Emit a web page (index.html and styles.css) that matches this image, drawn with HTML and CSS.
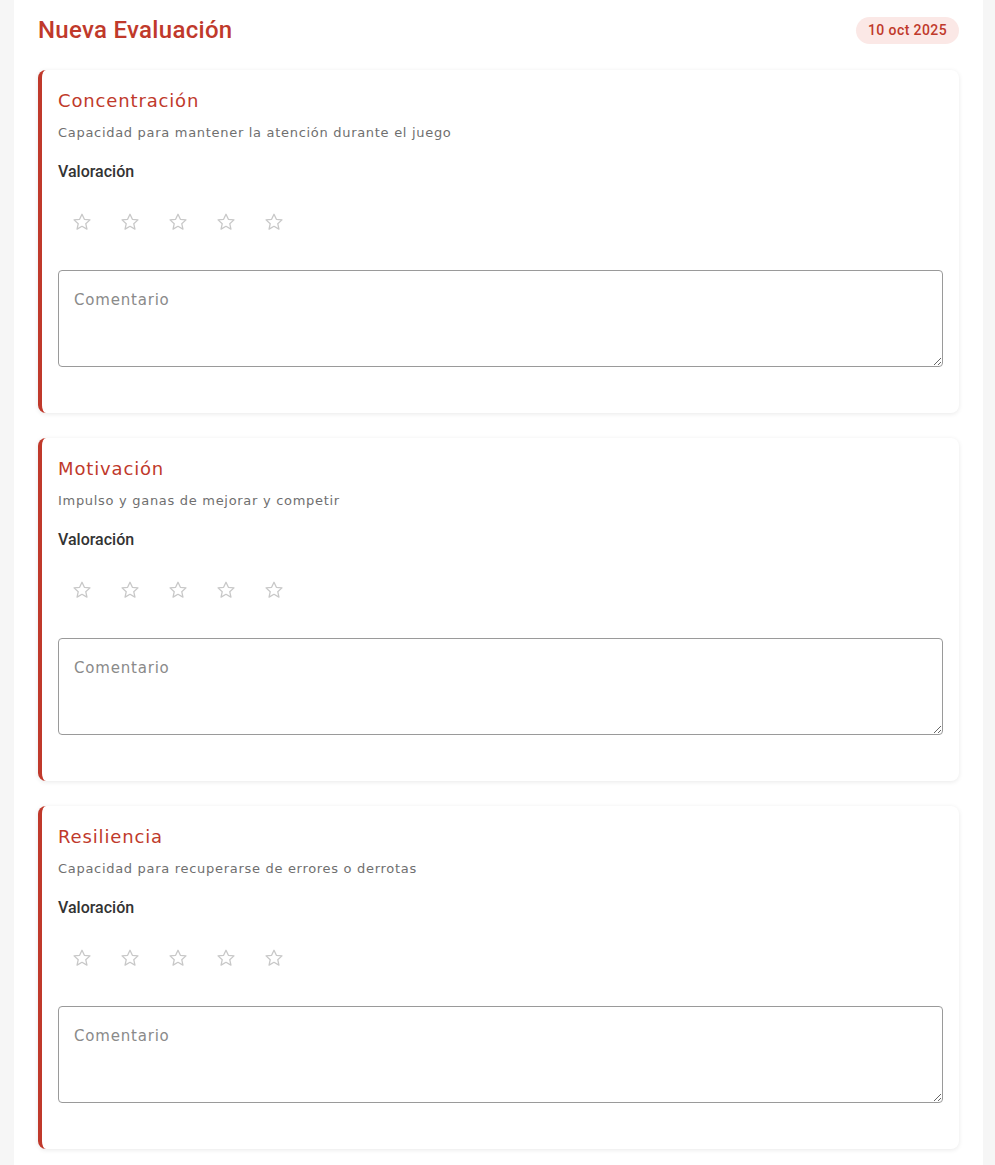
FILE: index.html
```html
<!DOCTYPE html>
<html lang="es">
<head>
<meta charset="utf-8">
<title>Nueva Evaluación</title>
<link rel="stylesheet" href="styles.css">
</head>
<body>
<div class="page">
  <header class="header">
    <h1 class="title">Nueva Evaluación</h1>
    <span class="badge">10 oct 2025</span>
  </header>

  <section class="card">
    <h2 class="card-title">Concentración</h2>
    <p class="card-desc">Capacidad para mantener la atención durante el juego</p>
    <div class="label">Valoración</div>
    <div class="stars">
      <button class="star"><svg viewBox="0 0 24 24"><path d="M12 3.5l2.6 5.6 6.1.6-4.6 4.1 1.3 6-5.4-3.1-5.4 3.1 1.3-6-4.6-4.1 6.1-.6z"/></svg></button>
      <button class="star"><svg viewBox="0 0 24 24"><path d="M12 3.5l2.6 5.6 6.1.6-4.6 4.1 1.3 6-5.4-3.1-5.4 3.1 1.3-6-4.6-4.1 6.1-.6z"/></svg></button>
      <button class="star"><svg viewBox="0 0 24 24"><path d="M12 3.5l2.6 5.6 6.1.6-4.6 4.1 1.3 6-5.4-3.1-5.4 3.1 1.3-6-4.6-4.1 6.1-.6z"/></svg></button>
      <button class="star"><svg viewBox="0 0 24 24"><path d="M12 3.5l2.6 5.6 6.1.6-4.6 4.1 1.3 6-5.4-3.1-5.4 3.1 1.3-6-4.6-4.1 6.1-.6z"/></svg></button>
      <button class="star"><svg viewBox="0 0 24 24"><path d="M12 3.5l2.6 5.6 6.1.6-4.6 4.1 1.3 6-5.4-3.1-5.4 3.1 1.3-6-4.6-4.1 6.1-.6z"/></svg></button>
    </div>
    <textarea class="comment" placeholder="Comentario"></textarea>
  </section>

  <section class="card">
    <h2 class="card-title">Motivación</h2>
    <p class="card-desc">Impulso y ganas de mejorar y competir</p>
    <div class="label">Valoración</div>
    <div class="stars">
      <button class="star"><svg viewBox="0 0 24 24"><path d="M12 3.5l2.6 5.6 6.1.6-4.6 4.1 1.3 6-5.4-3.1-5.4 3.1 1.3-6-4.6-4.1 6.1-.6z"/></svg></button>
      <button class="star"><svg viewBox="0 0 24 24"><path d="M12 3.5l2.6 5.6 6.1.6-4.6 4.1 1.3 6-5.4-3.1-5.4 3.1 1.3-6-4.6-4.1 6.1-.6z"/></svg></button>
      <button class="star"><svg viewBox="0 0 24 24"><path d="M12 3.5l2.6 5.6 6.1.6-4.6 4.1 1.3 6-5.4-3.1-5.4 3.1 1.3-6-4.6-4.1 6.1-.6z"/></svg></button>
      <button class="star"><svg viewBox="0 0 24 24"><path d="M12 3.5l2.6 5.6 6.1.6-4.6 4.1 1.3 6-5.4-3.1-5.4 3.1 1.3-6-4.6-4.1 6.1-.6z"/></svg></button>
      <button class="star"><svg viewBox="0 0 24 24"><path d="M12 3.5l2.6 5.6 6.1.6-4.6 4.1 1.3 6-5.4-3.1-5.4 3.1 1.3-6-4.6-4.1 6.1-.6z"/></svg></button>
    </div>
    <textarea class="comment" placeholder="Comentario"></textarea>
  </section>

  <section class="card">
    <h2 class="card-title">Resiliencia</h2>
    <p class="card-desc">Capacidad para recuperarse de errores o derrotas</p>
    <div class="label">Valoración</div>
    <div class="stars">
      <button class="star"><svg viewBox="0 0 24 24"><path d="M12 3.5l2.6 5.6 6.1.6-4.6 4.1 1.3 6-5.4-3.1-5.4 3.1 1.3-6-4.6-4.1 6.1-.6z"/></svg></button>
      <button class="star"><svg viewBox="0 0 24 24"><path d="M12 3.5l2.6 5.6 6.1.6-4.6 4.1 1.3 6-5.4-3.1-5.4 3.1 1.3-6-4.6-4.1 6.1-.6z"/></svg></button>
      <button class="star"><svg viewBox="0 0 24 24"><path d="M12 3.5l2.6 5.6 6.1.6-4.6 4.1 1.3 6-5.4-3.1-5.4 3.1 1.3-6-4.6-4.1 6.1-.6z"/></svg></button>
      <button class="star"><svg viewBox="0 0 24 24"><path d="M12 3.5l2.6 5.6 6.1.6-4.6 4.1 1.3 6-5.4-3.1-5.4 3.1 1.3-6-4.6-4.1 6.1-.6z"/></svg></button>
      <button class="star"><svg viewBox="0 0 24 24"><path d="M12 3.5l2.6 5.6 6.1.6-4.6 4.1 1.3 6-5.4-3.1-5.4 3.1 1.3-6-4.6-4.1 6.1-.6z"/></svg></button>
    </div>
    <textarea class="comment" placeholder="Comentario"></textarea>
  </section>
</div>
</body>
</html>
```

FILE: styles.css
```css
* { box-sizing: border-box; }

html, body {
  margin: 0;
  background: #f6f6f6;
}

body {
  font-family: "DejaVu Sans", "Noto Sans", sans-serif;
  color: #333;
}

.page {
  margin: 0 12px 0 14px;
  background: #ffffff;
  min-height: 100vh;
  padding: 15px 24px 24px;
}

.header {
  display: flex;
  justify-content: space-between;
  align-items: center;
  height: 30px;
  margin-bottom: 25px;
}

.title {
  margin: 0;
  font-family: Roboto, "Liberation Sans", sans-serif;
  font-weight: 500;
  font-size: 24px;
  letter-spacing: 0.3px;
  color: #c0392b;
}

.badge {
  font-family: Roboto, "Liberation Sans", sans-serif;
  font-weight: 500;
  font-size: 14px;
  letter-spacing: 0.4px;
  color: #c0392b;
  background: #fbe8e6;
  border-radius: 14px;
  padding: 6px 12px;
  line-height: 15px;
}

.card {
  background: #fff;
  border-left: 4px solid #c0392b;
  border-radius: 8px;
  box-shadow: 0 1px 5px rgba(0, 0, 0, 0.09);
  padding: 19px 16px 46px 16px;
  margin-bottom: 25px;
}

.card-title {
  margin: 0;
  font-weight: 400;
  font-size: 18px;
  line-height: 24px;
  letter-spacing: 0.85px;
  color: #c0392b;
}

.card-desc {
  margin: 11px 0 0;
  font-size: 13px;
  line-height: 18px;
  letter-spacing: 0.7px;
  color: #6f6f6f;
}

.label {
  margin-top: 20px;
  font-family: Roboto, "Liberation Sans", sans-serif;
  font-weight: 500;
  font-size: 16px;
  line-height: 20px;
  color: #333;
}

.stars {
  display: flex;
  margin-top: 16px;
}

.star {
  width: 48px;
  height: 48px;
  border: none;
  background: transparent;
  padding: 0;
  display: flex;
  align-items: center;
  justify-content: center;
  cursor: pointer;
}

.star svg {
  width: 22px;
  height: 22px;
  fill: none;
  stroke: #c8c8c8;
  stroke-width: 1.4;
  stroke-linejoin: round;
}

.comment {
  display: block;
  width: 100%;
  height: 97px;
  margin-top: 24px;
  border: 1px solid #9a9a9a;
  border-radius: 4px;
  padding: 20px 15px;
  font-family: "DejaVu Sans", "Noto Sans", sans-serif;
  font-size: 15px;
  letter-spacing: 0.8px;
  color: #333;
}

.comment::placeholder {
  color: #8a8a8a;
}
```
